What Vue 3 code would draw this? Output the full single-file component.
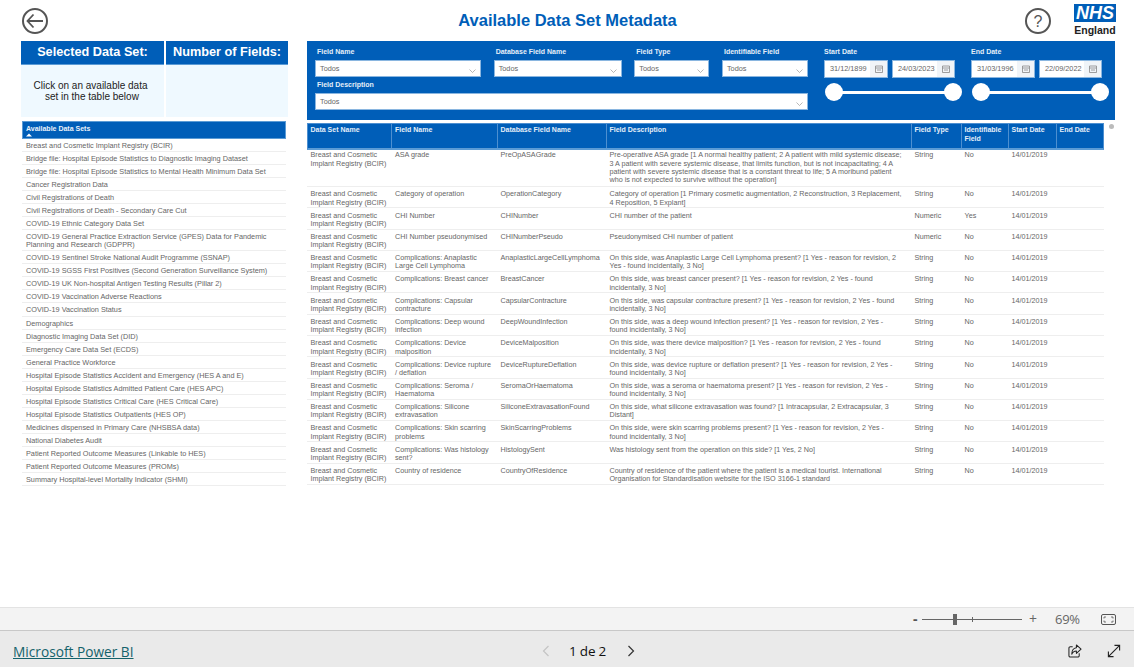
<template>
  <div class="page">
    <header class="topbar">
      <svg class="round-icon" width="28" height="28" viewBox="0 0 28 28">
        <circle cx="14" cy="14" r="12" fill="none" stroke="#555" stroke-width="2" />
        <path d="M6.500 14H22M12.500 7.500L6.500 14l6 6.500" fill="none" stroke="#555" stroke-width="1.800" />
      </svg>
      <h1 class="title">Available Data Set Metadata</h1>
      <svg class="round-icon" width="28" height="28" viewBox="0 0 28 28">
        <circle cx="14" cy="14" r="12" fill="none" stroke="#555" stroke-width="2" />
        <text x="14" y="19.500" text-anchor="middle" class="help-mark">?</text>
      </svg>
      <div class="logo">
        <div class="logo-mark">NHS</div>
        <div class="logo-name">England</div>
      </div>
    </header>

    <main class="content">
      <aside class="left">
        <div class="cards">
          <div class="card">
            <div class="card-head">Selected Data Set:</div>
            <div class="card-body">Click on an available data<br />&nbsp;set in the table below</div>
          </div>
          <div class="card">
            <div class="card-head">Number of Fields:</div>
            <div class="card-body"></div>
          </div>
        </div>
        <div class="sets">
          <div class="sets-head">
            <div>Available Data Sets</div>
            <svg width="6" height="4" viewBox="0 0 6 4"><path d="M0 3.500L3 .5l3 3z" fill="#fff" /></svg>
          </div>
          <div v-for="name in dataSets" :key="name" class="set-row">{{ name }}</div>
        </div>
      </aside>

      <section class="right">
        <div class="filters">
          <div class="filter-grid">
            <div v-for="f in filters" :key="f.label" class="filter" :class="{ wide: f.wide }">
              <div class="filter-label">{{ f.label }}</div>
              <div class="select">
                <span>Todos</span>
                <svg width="7" height="4" viewBox="0 0 7 4"><path d="M.5.5l3 3 3-3" fill="none" stroke="#999" stroke-width=".7" /></svg>
              </div>
            </div>
          </div>
          <div v-for="d in dates" :key="d.label" class="date-group">
            <div class="filter-label">{{ d.label }}</div>
            <div class="date-row">
              <div v-for="v in d.values" :key="v" class="date-box">
                <span class="date-value">{{ v }}</span>
                <span class="date-btn">
                  <svg width="8" height="8" viewBox="0 0 8 8"><path d="M.5 1h7v6.500h-7zM.5 3h7M2 5h4" fill="none" stroke="#888" stroke-width=".8" /></svg>
                </span>
              </div>
            </div>
            <div class="slider">
              <span class="knob"></span>
              <span class="track"></span>
              <span class="knob"></span>
            </div>
          </div>
        </div>

        <div class="table-wrap">
          <div class="fields">
            <div class="row head">
              <div v-for="h in headers" :key="h" class="th">{{ h }}</div>
            </div>
            <div v-for="r in rows" :key="r.db" class="row body">
              <div class="td">Breast and Cosmetic Implant Registry (BCIR)</div>
              <div class="td">{{ r.field }}</div>
              <div class="td">{{ r.db }}</div>
              <div class="td desc">{{ r.desc }}</div>
              <div class="td">{{ r.type }}</div>
              <div class="td">{{ r.id }}</div>
              <div class="td">14/01/2019</div>
              <div class="td"></div>
            </div>
          </div>
          <span class="scroll-dot"></span>
        </div>
      </section>
    </main>

    <div class="zoombar">
      <span class="zoom-sign minus">-</span>
      <div class="zoom-slider"><span class="zoom-thumb"></span><span class="zoom-tick"></span></div>
      <span class="zoom-sign plus">+</span>
      <span class="zoom-pct">69%</span>
      <svg width="15" height="11" viewBox="0 0 15 11">
        <rect x=".5" y=".5" width="14" height="10" rx="1.500" fill="none" stroke="#555" />
        <path d="M3 4.500V3h2M12 4.500V3h-2M3 6.500V8h2M12 6.500V8h-2" fill="none" stroke="#555" stroke-width=".8" />
      </svg>
    </div>

    <footer class="footer">
      <a class="brand">Microsoft Power BI</a>
      <div class="pager">
        <svg width="8" height="12" viewBox="0 0 8 12"><path d="M6.500 1L1.500 6l5 5" fill="none" stroke="#c4c4c4" stroke-width="1.200" /></svg>
        <span class="page-num">1 de 2</span>
        <svg width="8" height="12" viewBox="0 0 8 12"><path d="M1.500 1l5 5-5 5" fill="none" stroke="#333" stroke-width="1.200" /></svg>
      </div>
      <div class="footer-actions">
        <svg width="14" height="14" viewBox="0 0 15 15">
          <path d="M5 3H2.500A1.500 1.500 0 0 0 1 4.500v8A1.500 1.500 0 0 0 2.500 14h8a1.500 1.500 0 0 0 1.500-1.500V10" fill="none" stroke="#222" stroke-width="1.100" />
          <path d="M9 1l5 4.500L9 10V7.500C6.500 7.500 5 8.500 4 11c0-4 1.500-6.500 5-7z" fill="none" stroke="#222" stroke-width="1.100" stroke-linejoin="round" />
        </svg>
        <svg width="14" height="14" viewBox="0 0 15 15">
          <path d="M1.500 13.500l12-12M8 1.500h5.500V7M1.500 8v5.500H7" fill="none" stroke="#222" stroke-width="1.200" />
        </svg>
      </div>
    </footer>
  </div>
</template>

<script setup>
const dataSets = [
  'Breast and Cosmetic Implant Registry (BCIR)',
  'Bridge file: Hospital Episode Statistics to Diagnostic Imaging Dataset',
  'Bridge file: Hospital Episode Statistics to Mental Health Minimum Data Set',
  'Cancer Registration Data',
  'Civil Registrations of Death',
  'Civil Registrations of Death - Secondary Care Cut',
  'COVID-19 Ethnic Category Data Set',
  'COVID-19 General Practice Extraction Service (GPES) Data for Pandemic Planning and Research (GDPPR)',
  'COVID-19 Sentinel Stroke National Audit Programme (SSNAP)',
  'COVID-19 SGSS First Positives (Second Generation Surveillance System)',
  'COVID-19 UK Non-hospital Antigen Testing Results (Pillar 2)',
  'COVID-19 Vaccination Adverse Reactions',
  'COVID-19 Vaccination Status',
  'Demographics',
  'Diagnostic Imaging Data Set (DID)',
  'Emergency Care Data Set (ECDS)',
  'General Practice Workforce',
  'Hospital Episode Statistics Accident and Emergency (HES A and E)',
  'Hospital Episode Statistics Admitted Patient Care (HES APC)',
  'Hospital Episode Statistics Critical Care (HES Critical Care)',
  'Hospital Episode Statistics Outpatients (HES OP)',
  'Medicines dispensed in Primary Care (NHSBSA data)',
  'National Diabetes Audit',
  'Patient Reported Outcome Measures (Linkable to HES)',
  'Patient Reported Outcome Measures (PROMs)',
  'Summary Hospital-level Mortality Indicator (SHMI)'
]

const filters = [
  { label: 'Field Name' },
  { label: 'Database Field Name' },
  { label: 'Field Type' },
  { label: 'Identifiable Field' },
  { label: 'Field Description', wide: true }
]

const dates = [
  { label: 'Start Date', values: ['31/12/1899', '24/03/2023'] },
  { label: 'End Date', values: ['31/03/1996', '22/09/2022'] }
]

const headers = ['Data Set Name', 'Field Name', 'Database Field Name', 'Field Description', 'Field Type', 'Identifiable Field', 'Start Date', 'End Date']

const revision = '[1 Yes - reason for revision, 2 Yes - found incidentally, 3 No]'

const rows = [
  { field: 'ASA grade', db: 'PreOpASAGrade', type: 'String', id: 'No', desc: 'Pre-operative ASA grade [1 A normal healthy patient; 2 A patient with mild systemic disease; 3 A patient with severe systemic disease, that limits function, but is not incapacitating; 4 A patient with severe systemic disease that is a constant threat to life; 5 A moribund patient who is not expected to survive without the operation]' },
  { field: 'Category of operation', db: 'OperationCategory', type: 'String', id: 'No', desc: 'Category of operation [1 Primary cosmetic augmentation, 2 Reconstruction, 3 Replacement, 4 Reposition, 5 Explant]' },
  { field: 'CHI Number', db: 'CHINumber', type: 'Numeric', id: 'Yes', desc: 'CHI number of the patient' },
  { field: 'CHI Number pseudonymised', db: 'CHINumberPseudo', type: 'Numeric', id: 'No', desc: 'Pseudonymised CHI number of patient' },
  { field: 'Complications: Anaplastic Large Cell Lymphoma', db: 'AnaplasticLargeCellLymphoma', type: 'String', id: 'No', desc: `On this side, was Anaplastic Large Cell Lymphoma present? ${revision}` },
  { field: 'Complications: Breast cancer', db: 'BreastCancer', type: 'String', id: 'No', desc: `On this side, was breast cancer present? ${revision}` },
  { field: 'Complications: Capsular contracture', db: 'CapsularContracture', type: 'String', id: 'No', desc: `On this side, was capsular contracture present? ${revision}` },
  { field: 'Complications: Deep wound infection', db: 'DeepWoundInfection', type: 'String', id: 'No', desc: `On this side, was a deep wound infection present? ${revision}` },
  { field: 'Complications: Device malposition', db: 'DeviceMalposition', type: 'String', id: 'No', desc: `On this side, was there device malposition? ${revision}` },
  { field: 'Complications: Device rupture / deflation', db: 'DeviceRuptureDeflation', type: 'String', id: 'No', desc: `On this side, was device rupture or deflation present? ${revision}` },
  { field: 'Complications: Seroma / Haematoma', db: 'SeromaOrHaematoma', type: 'String', id: 'No', desc: `On this side, was a seroma or haematoma present? ${revision}` },
  { field: 'Complications: Silicone extravasation', db: 'SiliconeExtravasationFound', type: 'String', id: 'No', desc: 'On this side, what silicone extravasation was found? [1 Intracapsular, 2 Extracapsular, 3 Distant]' },
  { field: 'Complications: Skin scarring problems', db: 'SkinScarringProblems', type: 'String', id: 'No', desc: `On this side, were skin scarring problems present? ${revision}` },
  { field: 'Complications: Was histology sent?', db: 'HistologySent', type: 'String', id: 'No', desc: 'Was histology sent from the operation on this side? [1 Yes, 2 No]' },
  { field: 'Country of residence', db: 'CountryOfResidence', type: 'String', id: 'No', desc: 'Country of residence of the patient where the patient is a medical tourist. International Organisation for Standardisation website for the ISO 3166-1 standard' }
]
</script>

<style>
html,
body {
  margin: 0;
  background: #fff;
}
</style>

<style scoped>
.page {
  width: 1134px;
  height: 667px;
  display: flex;
  flex-direction: column;
  overflow: hidden;
  font-family: "Liberation Sans", Arial, sans-serif;
  background: #fff;
}

.topbar {
  height: 41px;
  flex: none;
  display: flex;
  align-items: flex-start;
  padding-left: 21px;
  box-sizing: border-box;
}

.round-icon {
  margin-top: 7px;
  flex: none;
}

.help-mark {
  font-family: "Liberation Sans", Arial, sans-serif;
  font-size: 16px;
  fill: #555;
}

.title {
  flex: none;
  width: 975px;
  margin: 10px 0 0;
  padding-left: 62px;
  box-sizing: border-box;
  text-align: center;
  font-size: 16.5px;
  line-height: 20px;
  font-weight: 700;
  color: #005eb8;
}

.logo {
  margin: 4px 0 0 22px;
  width: 42px;
}

.logo-mark {
  height: 18px;
  background: #005eb8;
  color: #fff;
  font-size: 18px;
  line-height: 18px;
  font-weight: 700;
  font-style: italic;
  text-align: center;
}

.logo-name {
  margin-top: 2px;
  font-size: 10.5px;
  line-height: 12px;
  font-weight: 700;
  color: #222;
  text-align: center;
}

.content {
  flex: 1 1 0;
  display: flex;
  min-height: 0;
  padding-left: 21px;
}

.left {
  width: 267px;
  flex: none;
}

.cards {
  display: flex;
  gap: 2px;
}

.card {
  width: 143px;
}

.card + .card {
  width: 122px;
}

.card-head {
  height: 24px;
  box-sizing: border-box;
  background: #005eb8;
  border-bottom: 1px solid #5b9bd5;
  color: #fff;
  font-size: 12.7px;
  line-height: 22px;
  font-weight: 700;
  text-align: center;
}

.card-body {
  height: 52px;
  background: #eff9ff;
  box-sizing: border-box;
  padding-top: 15px;
  padding-right: 4px;
  text-align: center;
  font-size: 10px;
  line-height: 11px;
  color: #222;
}

.sets {
  margin: 4px 0 0 1px;
  width: 263.5px;
}

.sets-head {
  height: 18px;
  background: #005eb8;
  border: 1px solid #5b9bd5;
  box-sizing: border-box;
  padding: 2px 3px;
  color: #e8f1fa;
  font-size: 7px;
  line-height: 9px;
  font-weight: 700;
}

.sets-head svg {
  display: block;
}

.set-row {
  padding: 3px 4px .72px;
  border-bottom: 1px solid #eee;
  font-size: 7.3px;
  line-height: 8.3px;
  color: #666;
}

.right {
  width: 808px;
  margin-left: 19px;
  flex: none;
}

.filters {
  height: 79px;
  background: #005eb8;
  box-sizing: border-box;
  padding: 6px 0 0 8px;
  display: flex;
}

.filter-grid {
  display: grid;
  grid-template-columns: 166px 128px 75px 86px;
  column-gap: 12.67px;
  row-gap: 3px;
  align-content: start;
  width: 493px;
  margin-right: 16px;
  flex: none;
}

.filter.wide {
  grid-column: 1 / -1;
}

.filter-label {
  color: #e4eef9;
  font-size: 7px;
  line-height: 9px;
  font-weight: 700;
  padding-left: 2px;
  margin-bottom: 4px;
}

.select {
  height: 17px;
  background: #fff;
  border: 1px solid #8ab6e0;
  box-sizing: border-box;
  padding: 0 4px;
  display: flex;
  align-items: center;
  justify-content: space-between;
  font-size: 7.3px;
  color: #666;
}

.select svg {
  margin-top: 4px;
}

.date-group {
  width: 138px;
  margin-right: 9px;
  flex: none;
}

.date-group .filter-label {
  padding-left: 0;
}

.date-row {
  display: flex;
  gap: 4px;
}

.date-box {
  width: 64px;
  height: 18px;
  background: #fff;
  border: 1px solid #8ab6e0;
  box-sizing: border-box;
  display: flex;
  font-size: 7.3px;
  line-height: 16px;
  color: #666;
}

.date-box + .date-box {
  width: 63px;
}

.date-value {
  flex: 1;
  padding-left: 5px;
  white-space: nowrap;
}

.date-btn {
  width: 17px;
  flex: none;
  background: #f0f4f8;
  display: flex;
  align-items: center;
  justify-content: center;
}

.slider {
  display: flex;
  align-items: center;
  margin: 5px 0 0 1px;
}

.knob {
  width: 18px;
  height: 18px;
  border-radius: 50%;
  background: #fff;
  flex: none;
}

.track {
  flex: 1;
  height: 3px;
  margin: 0 -1px;
  background: #fff;
}

.table-wrap {
  display: flex;
  align-items: flex-start;
  margin-top: 3px;
}

.fields {
  width: 797px;
  flex: none;
  font-size: 7.2px;
  line-height: 8.3px;
  color: #666;
}

.row {
  display: grid;
  grid-template-columns: 84.5px 105.5px 109px 305px 50px 47px 48px 48px;
}

.row.head {
  height: 27px;
  box-sizing: border-box;
  background: #005eb8;
  border: 1px solid #4d8fd0;
  border-bottom: 2px solid #5b9bd5;
}

.th {
  padding: 1px 2px 0 2.500px;
  color: #e4eef9;
  border-right: 1px solid #4d8fd0;
  font-size: 7px;
  line-height: 9px;
  font-weight: 700;
}

.th:first-child {
  width: 83.500px;
  box-sizing: border-box;
}

.th:last-child {
  border-right: 0;
}

.row.body {
  border-bottom: 1px solid #eee;
}

.td {
  padding: 3.300px 3px .4px 3.500px;
}

.td.desc {
  padding-right: 8.500px;
}

.row.body:nth-child(2) .td {
  padding-top: 1.300px;
  padding-bottom: 1.500px;
}

.scroll-dot {
  width: 5px;
  height: 5px;
  margin: 1px 0 0 4.500px;
  border-radius: 50%;
  background: #bbb;
  flex: none;
}

.zoombar {
  height: 24px;
  flex: none;
  box-sizing: border-box;
  background: #f3f3f3;
  border-top: 1px solid #e3e3e3;
  border-bottom: 1px solid #c8c8c8;
  display: flex;
  align-items: center;
  padding-left: 913px;
  color: #666;
}

.zoom-sign {
  font-family: "Open Sans", sans-serif;
  font-size: 14px;
  line-height: 20px;
  width: 9px;
}

.minus {
  font-weight: 700;
  color: #555;
}

.zoom-slider {
  width: 100px;
  height: 1px;
  background: #666;
  display: flex;
  align-items: center;
  margin: 0 7px 0 0;
}

.zoom-thumb {
  width: 4px;
  height: 11px;
  margin-left: 31px;
  background: #666;
}

.zoom-tick {
  width: 1px;
  height: 5px;
  margin-left: 15px;
  background: #666;
}

.plus {
  width: 26px;
}

.zoom-pct {
  font-family: "Open Sans", sans-serif;
  font-size: 13px;
  letter-spacing: -.3px;
  width: 46px;
}

.footer {
  height: 36px;
  flex: none;
  box-sizing: border-box;
  background: #eaeaea;
  display: flex;
  align-items: center;
  padding: 4px 14px 0 13px;
}

.brand {
  width: 526px;
  flex: none;
  font-family: "Open Sans", sans-serif;
  font-size: 13.700px;
  color: #14626b;
  text-decoration: underline;
  white-space: nowrap;
}

.pager {
  display: flex;
  align-items: center;
  width: 526px;
  margin-left: 3px;
  flex: none;
}

.page-num {
  margin: 0 21px 0 19px;
  font-family: "Open Sans", sans-serif;
  font-size: 13.500px;
  letter-spacing: -.2px;
  color: #111;
}

.footer-actions {
  display: flex;
  gap: 25px;
}
</style>
